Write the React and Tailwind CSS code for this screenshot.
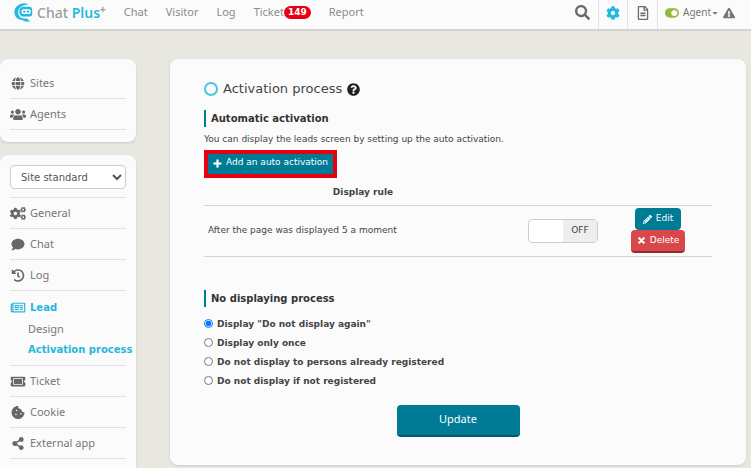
import { useState } from "react";
import {
  FaCaretDown,
  FaCog,
  FaCogs,
  FaComment,
  FaCookieBite,
  FaExclamationTriangle,
  FaGlobe,
  FaHistory,
  FaPencilAlt,
  FaPlus,
  FaQuestionCircle,
  FaRegFileAlt,
  FaRegNewspaper,
  FaSearch,
  FaShareAlt,
  FaTicketAlt,
  FaTimes,
  FaToggleOn,
  FaUsers,
} from "react-icons/fa";

const RULES = [
  'Display "Do not display again"',
  "Display only once",
  "Do not display to persons already registered",
  "Do not display if not registered",
];

function Logo() {
  return (
    <a href="#" className="flex items-center gap-1 pb-1 whitespace-nowrap">
      <svg viewBox="0 0 19 19" className="size-[19px]" fill="none">
        <path
          d="M14.500 1.600C12 .100 8.500 -.100 5.800 1.200C1.900 3 0 6.200 .400 10C.900 14.200 4 16.800 8.200 16.900C10.500 18.300 13.500 18.900 16.200 18.200C14.700 17.500 13.700 16.700 13.200 15.600C8.500 16.200 4.600 14.300 4.200 10C3.800 5.500 7.500 2.200 14.500 1.600Z"
          fill="#1fb9e2"
        />
        <path
          d="M9.500 3.800H15a3.200 3.200 0 0 1 3.200 3.200v3.400a3.200 3.200 0 0 1-3.200 3.200H9.800A4.300 4.300 0 0 1 5.300 9.300V8A4.200 4.200 0 0 1 9.500 3.800Z"
          fill="#1fb9e2"
        />
        <rect x="7.600" y="6.200" width="9" height="4.800" rx="1.500" fill="#fff" />
        <circle cx="10.200" cy="8.600" r="1.200" fill="#1fb9e2" />
        <circle cx="14" cy="8.600" r="1.200" fill="#1fb9e2" />
      </svg>
      <span className="flex text-[14px] leading-5 font-medium text-[#9b9b9b]">
        Chat&nbsp;<span className="font-semibold text-[#1fb9e2]">Plus</span>
        <span className="text-[10px] leading-3 font-bold">+</span>
      </span>
    </a>
  );
}

function Header() {
  return (
    <header className="flex h-[31px] shrink-0 items-stretch border-b-2 border-[#d3d3cf] bg-[#fbfbfb] pl-3.5 text-[11px] text-[#8c8c8c]">
      <Logo />
      <nav className="flex flex-1 items-center gap-[18px] pb-1 pl-[18px]">
        <a href="#">Chat</a>
        <a href="#">Visitor</a>
        <a href="#">Log</a>
        <a href="#" className="flex items-center">
          Ticket
          <span className="rounded-full bg-[#e60012] px-1 font-['DejaVu_Sans',sans-serif] text-[9px] leading-[13px] font-bold text-white">
            149
          </span>
        </a>
        <a href="#">Report</a>
      </nav>
      <button aria-label="Search" className="px-2 pb-1 text-[15px] text-[#6b6b6b]">
        <FaSearch />
      </button>
      <button aria-label="Settings" className="w-[29px] border-l border-[#e2e2e2] pb-1 pl-[7px] text-[14px] text-[#1fb9e2]">
        <FaCog />
      </button>
      <button aria-label="Documents" className="w-[30px] border-l border-[#e2e2e2] pb-1 pl-2 text-[14px] text-[#6b6b6b]">
        <FaRegFileAlt />
      </button>
      <button className="flex items-center gap-1 border-l border-[#e2e2e2] pr-4 pb-1 pl-[7px] text-[10px] text-[#777]">
        <FaToggleOn className="text-[14px] text-[#96b93c]" />
        <span className="flex items-center">
          Agent
          <FaCaretDown className="text-[8px]" />
        </span>
        <FaExclamationTriangle className="text-[12px]" />
      </button>
    </header>
  );
}

function MenuLink({ icon: Icon, label }) {
  return (
    <a href="#" className="flex h-[30px] items-center gap-1">
      <Icon className="h-[13px] w-4 shrink-0 text-[#686868]" />
      {label}
    </a>
  );
}

function LeadMenu() {
  return (
    <>
      <a
        href="#"
        className="flex h-7 items-center gap-1 pt-1 font-['DejaVu_Sans',sans-serif] text-[10px] font-bold text-[#27b6dc]"
      >
        <FaRegNewspaper className="h-[13px] w-4 shrink-0" />
        Lead
      </a>
      <ul className="pl-[18px] leading-5 whitespace-nowrap">
        <li className="h-5">
          <a href="#">Design</a>
        </li>
        <li className="h-5">
          <a href="#" className="font-['DejaVu_Sans',sans-serif] text-[10px] font-bold text-[#27b6dc]">
            Activation process
          </a>
        </li>
      </ul>
    </>
  );
}

function Sidebar() {
  return (
    <aside className="flex w-[136px] shrink-0 flex-col gap-[13px] text-[11px] text-[#777]">
      <ul className="rounded-lg bg-[#fbfbfb] px-2.5 pt-[9px] pb-3 shadow-sm">
        <li className="border-b border-[#e2e2e2]">
          <MenuLink icon={FaGlobe} label="Sites" />
        </li>
        <li className="border-b border-[#e2e2e2]">
          <MenuLink icon={FaUsers} label="Agents" />
        </li>
      </ul>
      <div className="flex-1 rounded-t-lg bg-[#fbfbfb] px-2.5 pt-2.5 shadow-sm">
        <select
          aria-label="Site"
          className="block h-6 w-full rounded-sm border border-[#ccc] bg-white px-1.5 font-['DejaVu_Sans',sans-serif] text-[10px] text-[#555]"
        >
          <option>Site standard</option>
        </select>
        <ul className="mt-2 border-t border-[#e2e2e2]">
          <li className="border-b border-[#e2e2e2]">
            <MenuLink icon={FaCogs} label="General" />
          </li>
          <li className="border-b border-[#e2e2e2]">
            <MenuLink icon={FaComment} label="Chat" />
          </li>
          <li className="border-b border-[#e2e2e2]">
            <MenuLink icon={FaHistory} label="Log" />
          </li>
          <li className="border-b border-[#e2e2e2] pb-1.5">
            <LeadMenu />
          </li>
          <li className="border-b border-[#e2e2e2]">
            <MenuLink icon={FaTicketAlt} label="Ticket" />
          </li>
          <li className="border-b border-[#e2e2e2]">
            <MenuLink icon={FaCookieBite} label="Cookie" />
          </li>
          <li className="border-b border-[#e2e2e2]">
            <MenuLink icon={FaShareAlt} label="External app" />
          </li>
        </ul>
      </div>
    </aside>
  );
}

function SectionTitle({ children }) {
  return (
    <h2 className="border-l-2 border-[#007b96] pl-[5px] text-[10px] leading-[17px] font-bold text-[#333]">{children}</h2>
  );
}

export default function App() {
  const [rule, setRule] = useState(RULES[0]);
  const [enabled, setEnabled] = useState(false);

  return (
    <div className="flex h-screen flex-col overflow-hidden bg-[#e9e8e0] font-['Noto_Sans',sans-serif]">
      <Header />
      <div className="flex min-h-0 flex-1 gap-[34px] pt-7 pr-[5px]">
        <Sidebar />
        <main className="mb-[3px] flex-1 rounded-lg bg-[#fbfbfb] px-[34px] pt-5 font-['DejaVu_Sans',sans-serif] text-[9px] text-[#444] shadow-sm">
          <h1 className="flex items-center gap-[5px] text-[13px] leading-5 text-[#444]">
            <span className="size-3.5 rounded-full border-2 border-[#4cc3e4]" />
            Activation process
            <FaQuestionCircle className="text-[#222]" />
          </h1>
          <div className="mt-[11px]">
            <SectionTitle>Automatic activation</SectionTitle>
          </div>
          <p className="mt-1 leading-4">You can display the leads screen by setting up the auto activation.</p>
          <button className="mt-[3px] flex h-7 items-center gap-1 border-4 border-[#e60012] bg-[#007b96] px-[5px] pb-0.5 text-white">
            <FaPlus className="stroke-current stroke-[30]" />
            Add an auto activation
          </button>

          <table className="w-full">
            <thead>
              <tr className="border-b border-[#d4d4d4]">
                <th className="h-[27px] w-[318px] pt-0.5 font-bold">Display rule</th>
                <th />
                <th className="w-[108px]" />
              </tr>
            </thead>
            <tbody>
              <tr className="border-b border-[#d4d4d4]">
                <td className="h-[51px] pl-1">After the page was displayed 5 a moment</td>
                <td>
                  <button
                    role="switch"
                    aria-checked={enabled}
                    aria-label="Auto activation"
                    onClick={() => setEnabled(!enabled)}
                    className="ml-1.5 flex h-6 w-[70px] rounded-sm border border-[#ccc] bg-white"
                  >
                    <span className="ml-auto flex h-full w-[34px] items-center justify-center bg-[#eee]">
                      {enabled ? "ON" : "OFF"}
                    </span>
                  </button>
                </td>
                <td>
                  <div className="flex flex-col items-center">
                    <button className="flex h-[22px] items-center gap-1 rounded-sm bg-[#007b96] px-2 text-white">
                      <FaPencilAlt />
                      Edit
                    </button>
                    <button className="flex h-[23px] items-center gap-1 rounded-sm border-b-2 border-[#8f2c30] bg-[#d9474b] px-1.5 text-white">
                      <FaTimes className="stroke-current stroke-[40]" />
                      Delete
                    </button>
                  </div>
                </td>
              </tr>
            </tbody>
          </table>

          <div className="mt-[33px]">
            <SectionTitle>No displaying process</SectionTitle>
          </div>
          <div className="mt-[9px] font-bold">
            {RULES.map((text) => (
              <label key={text} className="flex h-[19px] items-center gap-1">
                <input
                  type="radio"
                  name="rule"
                  checked={rule === text}
                  onChange={() => setRule(text)}
                  className="mb-[3px] size-[9px]"
                />
                {text}
              </label>
            ))}
          </div>
          <button className="mx-auto mt-[13px] block h-8 w-[123px] rounded-sm border-b-2 border-[#0b5566] bg-[#007b96] font-['Noto_Sans',sans-serif] text-[11px] text-white">
            Update
          </button>
        </main>
      </div>
    </div>
  );
}
